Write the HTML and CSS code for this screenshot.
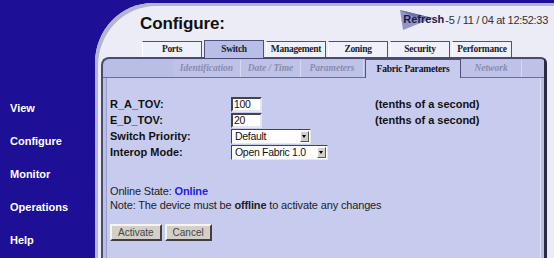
FILE: index.html
```html
<!DOCTYPE html>
<html>
<head>
<meta charset="utf-8">
<link rel="stylesheet" href="styles.css">
</head>
<body>
<nav class="side">
  <a class="nav-item">View</a>
  <a class="nav-item">Configure</a>
  <a class="nav-item">Monitor</a>
  <a class="nav-item">Operations</a>
  <a class="nav-item">Help</a>
</nav>
<div class="panel">
  <div class="head">
    <h1 class="title">Configure:</h1>
    <div class="refresh">
      <span class="refresh-btn">
        <svg class="refresh-arrow" width="34" height="24" viewBox="0 0 34 24"><polygon points="0,2 33,10 3,22" fill="#8f95c4"/><polygon points="0,2 33,10 14,9" fill="#6d72a6"/></svg>
        <span class="refresh-label">Refresh</span>
      </span><span class="stamp">-5 / 11 / 04 at 12:52:33</span>
    </div>
  </div>
  <div class="tabs">
    <div class="tab">Ports</div>
    <div class="tab active">Switch</div>
    <div class="tab">Management</div>
    <div class="tab">Zoning</div>
    <div class="tab">Security</div>
    <div class="tab">Performance</div>
  </div>
  <div class="box">
    <div class="subtabs">
      <div class="subtab w-id">Identification</div>
      <div class="subtab w-dt">Date / Time</div>
      <div class="subtab w-pa">Parameters</div>
      <div class="subtab active">Fabric Parameters</div>
      <div class="subtab w-nw">Network</div>
      <div class="subtab w-tail"></div>
    </div>
    <div class="inner">
      <div class="form">
        <div class="lbl">R_A_TOV:</div>
        <div class="fld"><span class="input">100</span></div>
        <div class="unit">(tenths of a second)</div>
        <div class="lbl">E_D_TOV:</div>
        <div class="fld"><span class="input">20</span></div>
        <div class="unit">(tenths of a second)</div>
        <div class="lbl">Switch Priority:</div>
        <div class="fld"><span class="sel sel-short">Default<span class="arr"></span></span></div>
        <div class="unit"></div>
        <div class="lbl">Interop Mode:</div>
        <div class="fld"><span class="sel sel-long">Open Fabric 1.0<span class="arr"></span></span></div>
        <div class="unit"></div>
      </div>
      <p class="line state">Online State: <b class="online">Online</b></p>
      <p class="line">Note: The device must be <b>offline</b> to activate any changes</p>
      <div class="btns">
        <span class="btn">Activate</span>
        <span class="btn">Cancel</span>
      </div>
    </div>
  </div>
</div>
</body>
</html>
```

FILE: styles.css
```css
html, body {
  margin: 0;
  padding: 0;
  height: 100%;
}
body {
  background: #1d0f96;
  display: flex;
  font-family: "Liberation Sans", Arial, sans-serif;
  overflow: hidden;
}
.side {
  width: 95px;
  flex: none;
  display: flex;
  flex-direction: column;
  padding-top: 101px;
  gap: 19px;
}
.nav-item {
  color: #ffffff;
  font-weight: bold;
  font-size: 11px;
  line-height: 14px;
  padding-left: 10px;
}
.panel {
  flex: 1;
  margin-top: 3px;
  background: #ececf7;
  border-top-left-radius: 58px 60px;
  box-shadow: inset 3px 3px 0 #b4b4cc;
  display: flex;
  flex-direction: column;
}
.head {
  height: 37px;
  display: flex;
  align-items: center;
  justify-content: space-between;
  padding-left: 45px;
  padding-right: 6px;
}
.title {
  margin: 0;
  font-family: "Liberation Sans", Arial, sans-serif;
  font-size: 17px;
  font-weight: bold;
  color: #111;
  letter-spacing: -0.1px;
  margin-top: 5px;
}
.refresh {
  display: flex;
  align-items: center;
  margin-top: -4px;
}
.refresh-btn {
  position: relative;
  display: inline-block;
  width: 45px;
  height: 24px;
}
.refresh-arrow {
  position: absolute;
  left: 0;
  top: 0;
}
.refresh-label {
  position: absolute;
  left: 3px;
  top: 5px;
  font-weight: bold;
  font-size: 11px;
  color: #1a1a4a;
  letter-spacing: 0;
}
.stamp {
  font-size: 11px;
  color: #333;
  letter-spacing: -0.3px;
}
.tabs {
  display: flex;
  gap: 2px;
  margin-left: 47px;
  height: 17px;
  align-items: flex-end;
}
.tab {
  width: 54px;
  height: 15px;
  background: #eef0fa;
  border: 1px solid #50507a;
  border-left-color: #ffffff;
  border-bottom: none;
  font-family: "Liberation Serif", "Times New Roman", serif;
  font-weight: bold;
  font-size: 9.5px;
  color: #222;
  text-align: center;
  line-height: 15px;
  letter-spacing: -0.3px;
  padding: 0 2px;
}
.tab.active {
  background: #b9bee6;
  height: 17px;
  margin-bottom: -1px;
  border-color: #50507a;
  border-width: 1px 1px 0 1px;
  line-height: 16px;
  position: relative;
  z-index: 1;
}
.box {
  flex: 1;
  margin-left: 6px;
  margin-right: 7px;
  background: #b9bee6;
  border: 2px solid #4a4a72;
  border-right: 3px solid #2a2a44;
  border-bottom: none;
  border-top-left-radius: 8px;
  border-top-right-radius: 6px;
  display: flex;
  flex-direction: column;
}
.subtabs {
  height: 18px;
  display: flex;
  padding-left: 70px;
  align-items: flex-end;
  border-bottom: 1px solid #6a6e9c;
}
.subtab {
  height: 17px;
  background: #bec2e8;
  border-right: 1px solid #d6d9f2;
  font-family: "Liberation Serif", "Times New Roman", serif;
  font-style: italic;
  font-weight: bold;
  font-size: 9.5px;
  color: #8a8cae;
  text-align: center;
  line-height: 16px;
}
.w-id { width: 67px; }
.w-dt { width: 59px; }
.w-pa { width: 62px; }
.w-nw { width: 60px; }
.w-tail { flex: 1; border-right: none; }
.subtab.active {
  width: 94px;
  height: 18px;
  margin-bottom: -1px;
  margin-left: 1px;
  background: #c7ccef;
  border: 1px solid #505078;
  border-bottom: none;
  font-style: normal;
  color: #111;
  line-height: 18px;
  letter-spacing: -0.2px;
}
.inner {
  flex: 1;
  margin: 0 3px;
  background: #c7ccef;
  border-left: 1px solid #9a9ec8;
  border-right: 1px solid #e2e4f6;
  padding: 18px 0 0 3px;
}
.form {
  display: grid;
  grid-template-columns: 121px 144px auto;
  grid-auto-rows: 16px;
  align-items: center;
}
.lbl, .unit {
  font-weight: bold;
  font-size: 11px;
  color: #111;
}
.fld {
  display: flex;
  align-items: center;
}
.input {
  display: inline-block;
  box-sizing: border-box;
  width: 31px;
  height: 15px;
  background: #fff;
  border: 2px solid;
  border-color: #444 #e8e8e8 #e8e8e8 #444;
  font-size: 10.5px;
  line-height: 11px;
  padding-left: 1px;
  color: #111;
  letter-spacing: -0.3px;
}
.sel {
  position: relative;
  display: inline-block;
  box-sizing: border-box;
  height: 15px;
  background: #fff;
  border: 1px solid;
  border-color: #444 #e8e8e8 #e8e8e8 #444;
  font-size: 10.5px;
  line-height: 13px;
  padding-left: 3px;
  color: #111;
  letter-spacing: -0.3px;
}
.sel-short { width: 80px; }
.sel-long { width: 97px; }
.arr {
  position: absolute;
  right: 1px;
  top: 1px;
  width: 9px;
  height: 11px;
  box-sizing: border-box;
  background: #d4d0c8;
  border: 1px solid;
  border-color: #fff #555 #555 #fff;
}
.arr::after {
  content: "";
  position: absolute;
  left: 1px;
  top: 3px;
  border-left: 2.5px solid transparent;
  border-right: 2.5px solid transparent;
  border-top: 3px solid #000;
}
.line {
  margin: 0;
  font-size: 11px;
  line-height: 14px;
  color: #222;
  letter-spacing: -0.15px;
}
.state {
  margin-top: 24px;
}
.online {
  color: #1e1ee6;
}
.btns {
  display: flex;
  gap: 3px;
  margin-top: 12px;
}
.btn {
  box-sizing: border-box;
  height: 17px;
  background: #d4d0c8;
  border: 2px solid;
  border-color: #f4f4f4 #404040 #404040 #f4f4f4;
  font-size: 10px;
  color: #444;
  line-height: 13px;
  padding: 0 6px;
}
```
